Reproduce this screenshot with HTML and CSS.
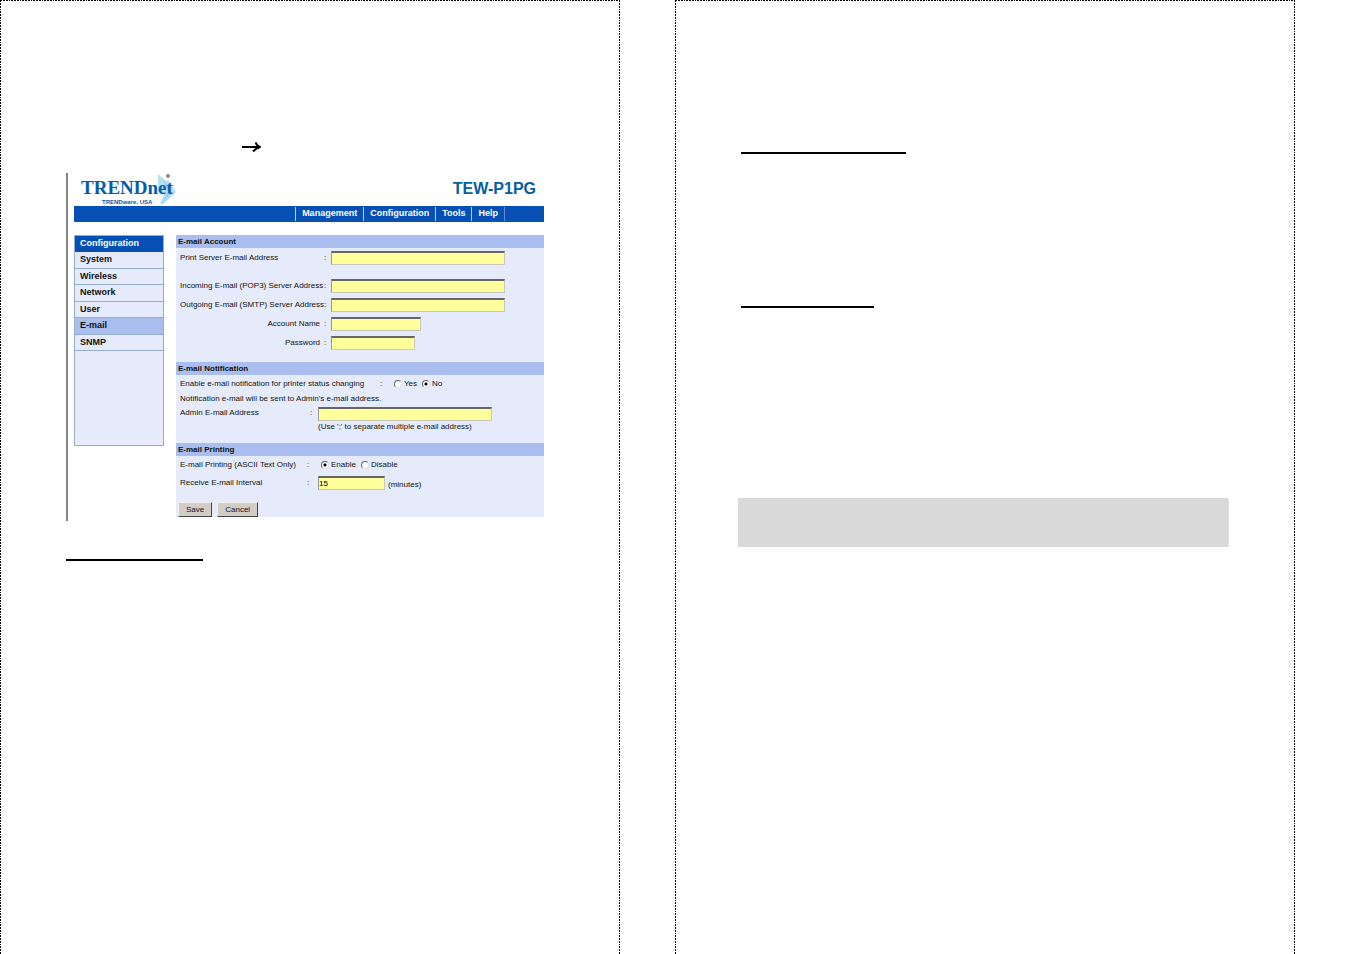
FILE: index.html
```html
<!DOCTYPE html>
<html lang="en">
<head>
  <meta charset="UTF-8">
  <meta name="viewport" content="width=device-width, initial-scale=1.0">
  <title>TEW-P1PG</title>
  <link rel="stylesheet" href="styles.css">
</head>
<body>

  <article class="page page-left">
    <svg class="arrow" viewBox="0 0 20 12" aria-hidden="true">
      <path d="M0 6H17.500" />
      <path d="M13.500 1.500L15 4L18 6L14.500 7.500L11 10.500" />
    </svg>

    <section class="screen">
      <header class="top">
        <svg class="logo" viewBox="0 0 104 33" role="img">
          <path class="logo-light" d="M84 1L92 8L94 7L102 19L97 24L88 32L86 30L90 22L84 19Z" />
          <path class="logo-shade" d="M89 6L98 18L88 31L94 18Z" />
          <text class="logo-name" x="7" y="21">TRENDnet</text>
          <text class="logo-sub" x="28" y="31">TRENDware, USA</text>
          <circle class="logo-mark" cx="94" cy="3" r="2" />
        </svg>
        <h1 class="model">TEW-P1PG</h1>
      </header>

      <nav class="menu">
        <a href="#">Management</a>
        <a href="#">Configuration</a>
        <a href="#">Tools</a>
        <a href="#">Help</a>
      </nav>

      <div class="content">
        <nav class="side">
          <div class="side-list">
            <h2 class="side-title">Configuration</h2>
            <a href="#">System</a>
            <a href="#">Wireless</a>
            <a href="#">Network</a>
            <a href="#">User</a>
            <a href="#" class="active">E-mail</a>
            <a href="#">SNMP</a>
          </div>
        </nav>

        <form class="panel">
          <h2>E-mail Account</h2>
          <div class="group account">
            <div class="row first">
              <label for="address">Print Server E-mail Address</label><span class="colon">:</span>
              <input type="text" class="wide" id="address">
            </div>
            <div class="row">
              <label for="pop">Incoming E-mail (POP3) Server Address</label><span class="colon">:</span>
              <input type="text" class="wide" id="pop">
            </div>
            <div class="row">
              <label for="smtp">Outgoing E-mail (SMTP) Server Address</label><span class="colon">:</span>
              <input type="text" class="wide" id="smtp">
            </div>
            <div class="row right">
              <label for="account">Account Name</label><span class="colon">:</span>
              <input type="text" class="name" id="account">
            </div>
            <div class="row right">
              <label for="password">Password</label><span class="colon">:</span>
              <input type="password" class="pass" id="password">
            </div>
          </div>

          <h2>E-mail Notification</h2>
          <div class="group notification">
            <div class="row status">
              <span class="label">Enable e-mail notification for printer status changing</span><span class="colon">:</span>
              <input type="radio" name="notify" id="yes"><label for="yes">Yes</label>
              <input type="radio" name="notify" id="no" checked><label for="no">No</label>
            </div>
            <p class="note">Notification e-mail will be sent to Admin's e-mail address.</p>
            <div class="row admin">
              <label for="admin">Admin E-mail Address</label><span class="colon">:</span>
              <input type="text" class="wide" id="admin">
            </div>
            <p class="hint">(Use ';' to separate multiple e-mail address)</p>
          </div>

          <h2>E-mail Printing</h2>
          <div class="group printing">
            <div class="row">
              <span class="label">E-mail Printing (ASCII Text Only)</span><span class="colon">:</span>
              <input type="radio" name="printing" id="enable" checked><label for="enable">Enable</label>
              <input type="radio" name="printing" id="disable"><label for="disable">Disable</label>
            </div>
            <div class="row interval">
              <label class="label" for="interval">Receive E-mail Interval</label><span class="colon">:</span>
              <input type="text" class="minutes" id="interval" value="15">
              <span class="unit">(minutes)</span>
            </div>
          </div>

          <div class="buttons">
            <button type="button">Save</button>
            <button type="button">Cancel</button>
          </div>
        </form>
      </div>
    </section>

    <hr class="rule rule-account">
  </article>

  <article class="page page-right">
    <hr class="rule rule-notification">
    <hr class="rule rule-printing">
    <div class="notice"></div>
  </article>

</body>
</html>
```
FILE: styles.css
```css
* {
  box-sizing: border-box;
}
body {
  margin: 0;
  padding-right: 56px;
  display: grid;
  grid-template-columns: 1fr 1fr;
  gap: 55px;
  background: white;
  color: #111;
  font-family: "Liberation Sans", Arial, sans-serif;
  font-size: 8px;
  line-height: 12px;
}
h1, h2, p {
  margin: 0;
}
a {
  color: inherit;
  text-decoration: none;
}

/* dash-dot outline on three sides */
.page {
  --dash: #000 0 2px, transparent 2px 3px, #000 3px 5px, transparent 5px 6px,
    #000 6px 8px, transparent 8px 9px, #000 9px 10px, transparent 10px 11px;
  min-height: 100vh;
  background:
    repeating-linear-gradient(to right, var(--dash)) top / 100% 1px no-repeat,
    repeating-linear-gradient(to bottom, var(--dash)) left / 1px 100% no-repeat,
    repeating-linear-gradient(to bottom, var(--dash)) right / 1px 100% no-repeat;
}
.page-left {
  padding: 141px 76px 0 66px;
}
.page-right {
  padding: 152px 66px 0 63px;
}
.arrow {
  display: block;
  width: 20px;
  height: 12px;
  margin: 0 0 20px 176px;
  fill: none;
  stroke: #000;
  stroke-width: 2;
  stroke-linejoin: round;
}
.rule {
  height: 2px;
  margin: 0;
  border: 0;
  background: #000;
}
.rule-account {
  width: 137px;
  margin-top: 38px;
}
.rule-notification {
  width: 165px;
  margin-left: 3px;
}
.rule-printing {
  width: 133px;
  margin: 152px 0 190px 3px;
}
.notice {
  height: 49px;
  background: #d9d9d9;
  border-right: 1px solid #e3e3e3;
}

.screen {
  border-left: 2px solid #858585;
  padding: 0 0 4px 6px;
}
.top {
  display: flex;
  justify-content: space-between;
  height: 33px;
  padding-right: 8px;
}
.logo {
  width: 104px;
  height: 33px;
}
.logo-light {
  fill: #b5e0f5;
}
.logo-shade {
  fill: #93d0f0;
}
.logo-mark {
  fill: #8a8a8a;
}
.logo-name {
  fill: #075ca8;
  font-family: "Liberation Serif", "Times New Roman", serif;
  font-size: 19px;
  font-weight: bold;
}
.logo-sub {
  fill: #075ca8;
  font-family: "Liberation Sans Narrow", "Liberation Sans", sans-serif;
  font-size: 6px;
  font-weight: bold;
}
.model {
  padding-top: 7px;
  color: #075ca3;
  font-size: 16px;
  line-height: 18px;
}

.menu {
  display: flex;
  justify-content: flex-end;
  height: 16px;
  padding: 1px 39px 1px 0;
  background: #054fb5;
  color: white;
  font-size: 9px;
  font-weight: bold;
  line-height: 13px;
}
.menu a {
  padding: 0 6px;
  border-left: 1px solid #b9cdec;
}
.menu a:last-child {
  border-right: 1px solid #5f8dd0;
}

.content {
  display: flex;
  align-items: flex-start;
  gap: 12px;
  padding-top: 13px;
}
.side {
  width: 90px;
  height: 211px;
  border: 1px solid #94add0;
  background: #e5ebfa;
}
.side-list {
  display: grid;
  grid-auto-rows: 1fr;
  height: 115px;
  font-size: 9px;
  font-weight: bold;
  line-height: 15px;
}
.side-title {
  padding-left: 5px;
  background: #054fb5;
  color: white;
  font-size: 9px;
  line-height: 15px;
}
.side a {
  padding-left: 5px;
  border-bottom: 1px solid #94add0;
}
.side .active {
  background: #a9beee;
}

.panel {
  flex: 1;
  background: #e5ebfa;
}
.panel h2 {
  padding-left: 2px;
  background: #a9beee;
  font-size: 8px;
  line-height: 13px;
}
.group {
  padding-left: 4px;
}
.row {
  display: flex;
  align-items: center;
  height: 14px;
  white-space: nowrap;
}
.colon {
  width: 8px;
}
.account {
  padding-top: 3px;
  padding-bottom: 7px;
}
.account .row {
  margin-bottom: 5px;
}
.account .first {
  margin-bottom: 14px;
}
.account label {
  width: 144px;
}
.account .colon {
  width: 7px;
}
.account .right label {
  padding-right: 4px;
  text-align: right;
}
.notification {
  padding-top: 2px;
  padding-bottom: 10px;
}
.status .label {
  width: 200px;
}
.status .colon,
.printing .row:first-child .colon {
  width: 14px;
}
.note {
  padding: 2px 0;
}
.admin {
  align-items: flex-start;
}
.admin label {
  width: 130px;
}
.hint {
  padding-left: 138px;
}
.printing {
  padding-top: 2px;
}
.printing .label {
  width: 127px;
}
.interval {
  margin-top: 4px;
}
.interval .colon {
  width: 11px;
}
.interval .minutes {
  margin-right: 3px;
}
.unit {
  padding-top: 3px;
}

input[type="text"],
input[type="password"] {
  height: 14px;
  padding: 0;
  border: 1px solid;
  border-color: #666 #c9c9b8 #c9c9b8 #999;
  border-top-width: 2px;
  border-radius: 0;
  background: #ffff9c;
  font: inherit;
}
.wide {
  width: 174px;
}
.name {
  width: 90px;
}
.pass {
  width: 84px;
}
.minutes {
  width: 67px;
}
input[type="radio"] {
  appearance: none;
  width: 8px;
  height: 8px;
  margin: 0 2px 0 0;
  border: 1px solid;
  border-color: #666 #ddd #ddd #666;
  border-radius: 50%;
  background: white;
}
input[type="radio"]:checked {
  background: radial-gradient(circle, #000 0 1px, #fff 2px);
}
input[type="radio"] + label {
  margin-right: 5px;
}

.buttons {
  display: flex;
  gap: 5px;
  padding: 12px 0 0 2px;
}
.buttons button {
  height: 15px;
  padding: 0 7px;
  border: 1px solid;
  border-color: #eee #444 #444 #eee;
  background: #d2cec6;
  color: #111;
  font: inherit;
}
```
